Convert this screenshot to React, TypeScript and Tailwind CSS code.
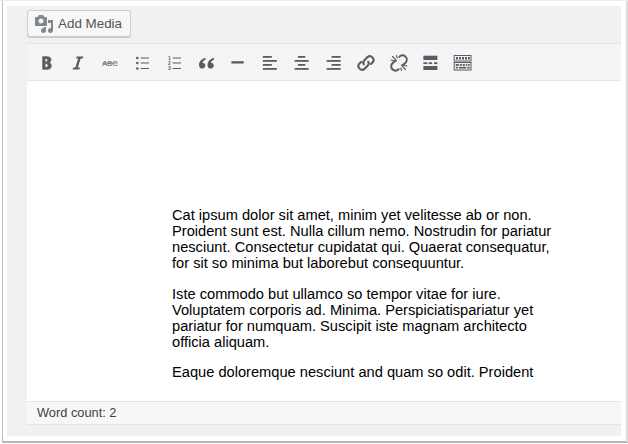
import React from "react";

const C = "#555d66";
const Ic = ({ children }: { children: React.ReactNode }) => (
  <svg width="20" height="20" viewBox="0 0 20 20" fill={C}>{children}</svg>
);
const H = ({ x, y, w, h = 1 }: { x: number; y: number; w: number; h?: number }) => <rect x={x} y={y} width={w} height={h} />;
const mono = "'Liberation Sans', sans-serif";

const LinkPath = () => (
  <g fill="none" stroke={C} strokeWidth="2.100" strokeLinecap="round" strokeLinejoin="round">
    <path d="M7.800 11.200a3 3 0 0 1 .4-3.800l3.300-3.300a3.700 3.700 0 0 1 5.200 5.200l-1.700 1.700" />
    <path d="M12.200 8.800a3 3 0 0 1-.4 3.800l-3.300 3.300a3.700 3.700 0 0 1-5.200-5.200l1.700-1.700" />
  </g>
);

const icons: React.ReactNode[] = [
  <path key="b" transform="translate(0.500 -0.500)" stroke={C} strokeWidth="0.400" fillRule="evenodd" d="M6 4v13h4.540c1.370 0 2.460-.33 3.260-1 .8-.66 1.200-1.580 1.200-2.770 0-.84-.2-1.510-.6-2.030s-1.010-.84-1.840-.96v-.03c.62-.13 1.110-.45 1.480-.98.37-.52.55-1.160.55-1.920 0-1.120-.38-1.960-1.140-2.520C12.690 4.260 11.460 4 9.810 4H6zm2.700 5.160V6.150h.96c.89 0 1.340.47 1.340 1.410 0 .52-.12.92-.36 1.200-.24.27-.59.41-1.030.41H8.700zm0 5.570v-3.370h1.180c1.020 0 1.530.55 1.530 1.650 0 .58-.13 1.010-.4 1.290-.26.29-.63.43-1.120.43H8.700z" />,
  <path key="i" transform="translate(0 -0.500)" d="M14.780 6h-2.130l-2.800 9h2.120l-.62 2H4.600l.62-2h2.130l2.800-9H8.030l.62-2h6.750z" />,
  <g key="s">
    <text x="10" y="13" textAnchor="middle" fontSize="8" textLength="15.400" lengthAdjust="spacingAndGlyphs" fontFamily={mono} fill={C}>ABC</text>
    <H x={2.300} y={9.700} w={15.400} h={0.700} />
  </g>,
  <g key="ul">
    <circle cx="5.300" cy="5" r="1.300" /><circle cx="5.300" cy="10" r="1.300" /><circle cx="5.300" cy="15.500" r="1.300" />
    <H x={8.700} y={4.500} w={8.300} /><H x={8.700} y={9.500} w={8.300} /><H x={8.700} y={15} w={8.300} />
  </g>,
  <g key="ol">
    <H x={8.700} y={4.500} w={8.300} /><H x={8.700} y={9.500} w={8.300} /><H x={8.700} y={15} w={8.300} />
    <text x="5.500" y="7" textAnchor="middle" fontSize="5" fontWeight="700" fontFamily={mono} fill={C}>1</text>
    <text x="5.500" y="12.200" textAnchor="middle" fontSize="5" fontWeight="700" fontFamily={mono} fill={C}>2</text>
    <text x="5.500" y="17.200" textAnchor="middle" fontSize="5" fontWeight="700" fontFamily={mono} fill={C}>3</text>
  </g>,
  <path key="q" d="M9.500 4.800C6 5.900 3 8.200 3 12.200c0 2 1.400 3.400 3.200 3.400s3.100-1.300 3.100-3c0-1.700-1.200-2.800-2.800-2.800.1-1.400 1.300-2.500 3-3.100zM18 4.800c-3.500 1.100-6.500 3.400-6.500 7.400 0 2 1.400 3.400 3.200 3.400s3.100-1.300 3.100-3c0-1.700-1.200-2.800-2.800-2.800.1-1.400 1.300-2.500 3-3.100z" />,
  <H key="hr" x={3.400} y={8.200} w={12.300} h={2.300} />,
  <g key="al"><H x={2.800} y={3} w={9} h={1.800} /><H x={2.800} y={7} w={14} h={1.800} /><H x={2.800} y={11} w={9} h={1.800} /><H x={2.800} y={15} w={14} h={1.800} /></g>,
  <g key="ac"><H x={6} y={3} w={7.300} h={1.800} /><H x={2.600} y={7} w={14} h={1.800} /><H x={6} y={11} w={7.300} h={1.800} /><H x={2.600} y={15} w={14} h={1.800} /></g>,
  <g key="ar"><H x={7.600} y={3} w={9} h={1.800} /><H x={2.600} y={7} w={14} h={1.800} /><H x={7.600} y={11} w={9} h={1.800} /><H x={2.600} y={15} w={14} h={1.800} /></g>,
  <g key="ln"><LinkPath /></g>,
  <g key="un">
    <g fill="none" stroke={C} strokeWidth="2" strokeLinecap="round">
      <path d="M10.300 3.800a3.700 3.700 0 0 1 6.400 5.700l-1.700 1.700c-.6.600-1.300 1-2 1" />
      <path d="M9.700 16.200a3.700 3.700 0 0 1-6.400-5.700l1.700-1.700c.6-.6 1.300-1 2-1" />
    </g>
    <path fill="none" stroke={C} strokeWidth="1.100" strokeLinecap="round" d="M3.500 3.500l3 3M7.500 2.500l.7 2.500M2 7l2.600.5M16.500 16.500l-3-3M12.500 17.500l-.7-2.500M18 13l-2.600-.5" />
  </g>,
  <g key="more"><H x={2.400} y={2.700} w={14} h={4.300} /><H x={2.400} y={9.300} w={4} h={1.800} /><H x={7.700} y={9.300} w={3.400} h={1.800} /><H x={13} y={9.300} w={3.400} h={1.800} /><H x={2.400} y={13} w={14} h={4} /></g>,
  <g key="kb">
    <rect x="1.200" y="2.500" width="16.800" height="5.500" fill="none" stroke={C} />
    <rect x="1.200" y="9.500" width="16.800" height="7.500" fill="none" stroke={C} />
    <H x={3} y={4} w={2} h={2.500} /><H x={6} y={4} w={2} h={2.500} /><H x={9} y={4} w={2} h={2.500} /><H x={12} y={4} w={2} h={2.500} /><H x={15} y={4} w={1.800} h={2.500} />
    <H x={2.800} y={11} w={3} h={1.800} /><H x={6.800} y={11} w={2} h={1.800} /><H x={9.800} y={11} w={2} h={1.800} /><H x={12.800} y={11} w={1.500} h={1.800} /><H x={15.200} y={11} w={1.500} h={1.800} />
    <H x={2.800} y={13.800} w={2} h={1.700} /><H x={5.800} y={13.800} w={7.500} h={1.700} /><H x={14.300} y={13.800} w={2.400} h={1.700} />
  </g>,
];

const MediaIcon = () => (
  <svg width="20" height="20" viewBox="0 0 20 20" fill="#82878c">
    <path fillRule="evenodd" d="M13 11V4c0-.55-.45-1-1-1h-1.670L9 1H5L3.670 3H2c-.55 0-1 .45-1 1v7c0 .55.45 1 1 1h10c.55 0 1-.45 1-1zM7 4.500c1.380 0 2.500 1.120 2.500 2.500S8.380 9.500 7 9.500 4.500 8.380 4.500 7 5.620 4.500 7 4.500zM14 6h5v10.500c0 1.380-1.120 2.500-2.500 2.500S14 17.880 14 16.500s1.120-2.500 2.500-2.500c.17 0 .34.020.5.050V9h-3V6zm-4 8.050V13h2v3.500c0 1.380-1.120 2.500-2.500 2.500S7 17.880 7 16.500 8.120 14 9.500 14c.17 0 .34.020.5.050z" />
  </svg>
);

const paragraphs = [
  ["Cat ipsum dolor sit amet, minim yet velitesse ab or non.", "Proident sunt est. Nulla cillum nemo. Nostrudin for pariatur", "nesciunt. Consectetur cupidatat qui. Quaerat consequatur,", "for sit so minima but laborebut consequuntur."],
  ["Iste commodo but ullamco so tempor vitae for iure.", "Voluptatem corporis ad. Minima. Perspiciatispariatur yet", "pariatur for numquam. Suscipit iste magnam architecto", "officia aliquam."],
  ["Eaque doloremque nesciunt and quam so odit. Proident"],
];

export default function App() {
  return (
    <div className="w-[628px] h-[444px] overflow-hidden bg-white font-['Liberation_Sans',sans-serif] border-t border-t-[#ececec] pl-[2px] pb-[1px]">
      <div className="h-full border-l border-l-[#bdbdbd] border-r-2 border-r-[#dcdcdc] border-b-2 border-b-[#b5b5b5] pt-[5px] pl-[4px] pr-[5px] pb-[5px]">
        <div className="h-full w-[614px] bg-[#f1f1f1] pl-[20px] flex flex-col">
          <div className="h-[37px] pt-[4px] shrink-0">
            <button className="h-[27px] w-[104px] flex items-center pl-[6px] pt-[1px] gap-[4px] rounded-[3px] border border-[#cccccc] bg-[#f7f7f7] shadow-[0_1px_0_#cccccc] text-[13.400px] text-[#555555]">
              <MediaIcon />
              <span>Add Media</span>
            </button>
          </div>
          <div className="h-[38px] shrink-0 border-y border-[#e5e5e5] bg-[#f5f5f5] flex items-center pl-[9px] pt-[1px] gap-[12.050px]">
            {icons.map((ic, i) => <Ic key={i}>{ic}</Ic>)}
          </div>
          <div className="h-[320px] shrink-0 bg-white pl-[145px] pt-[126px] text-[14.650px] leading-[16px] text-black">
            {paragraphs.map((p, i) => (
              <p key={i} className="mb-[14.700px] whitespace-nowrap">
                {p.map((l, j) => <span key={j} className="block">{l}</span>)}
              </p>
            ))}
          </div>
          <div className="h-[24px] shrink-0 border-y border-[#e5e5e5] bg-[#f7f7f7] pl-[10px] flex items-center text-[12.800px] text-[#3c4248]">
            Word count: 2
          </div>
        </div>
      </div>
    </div>
  );
}
